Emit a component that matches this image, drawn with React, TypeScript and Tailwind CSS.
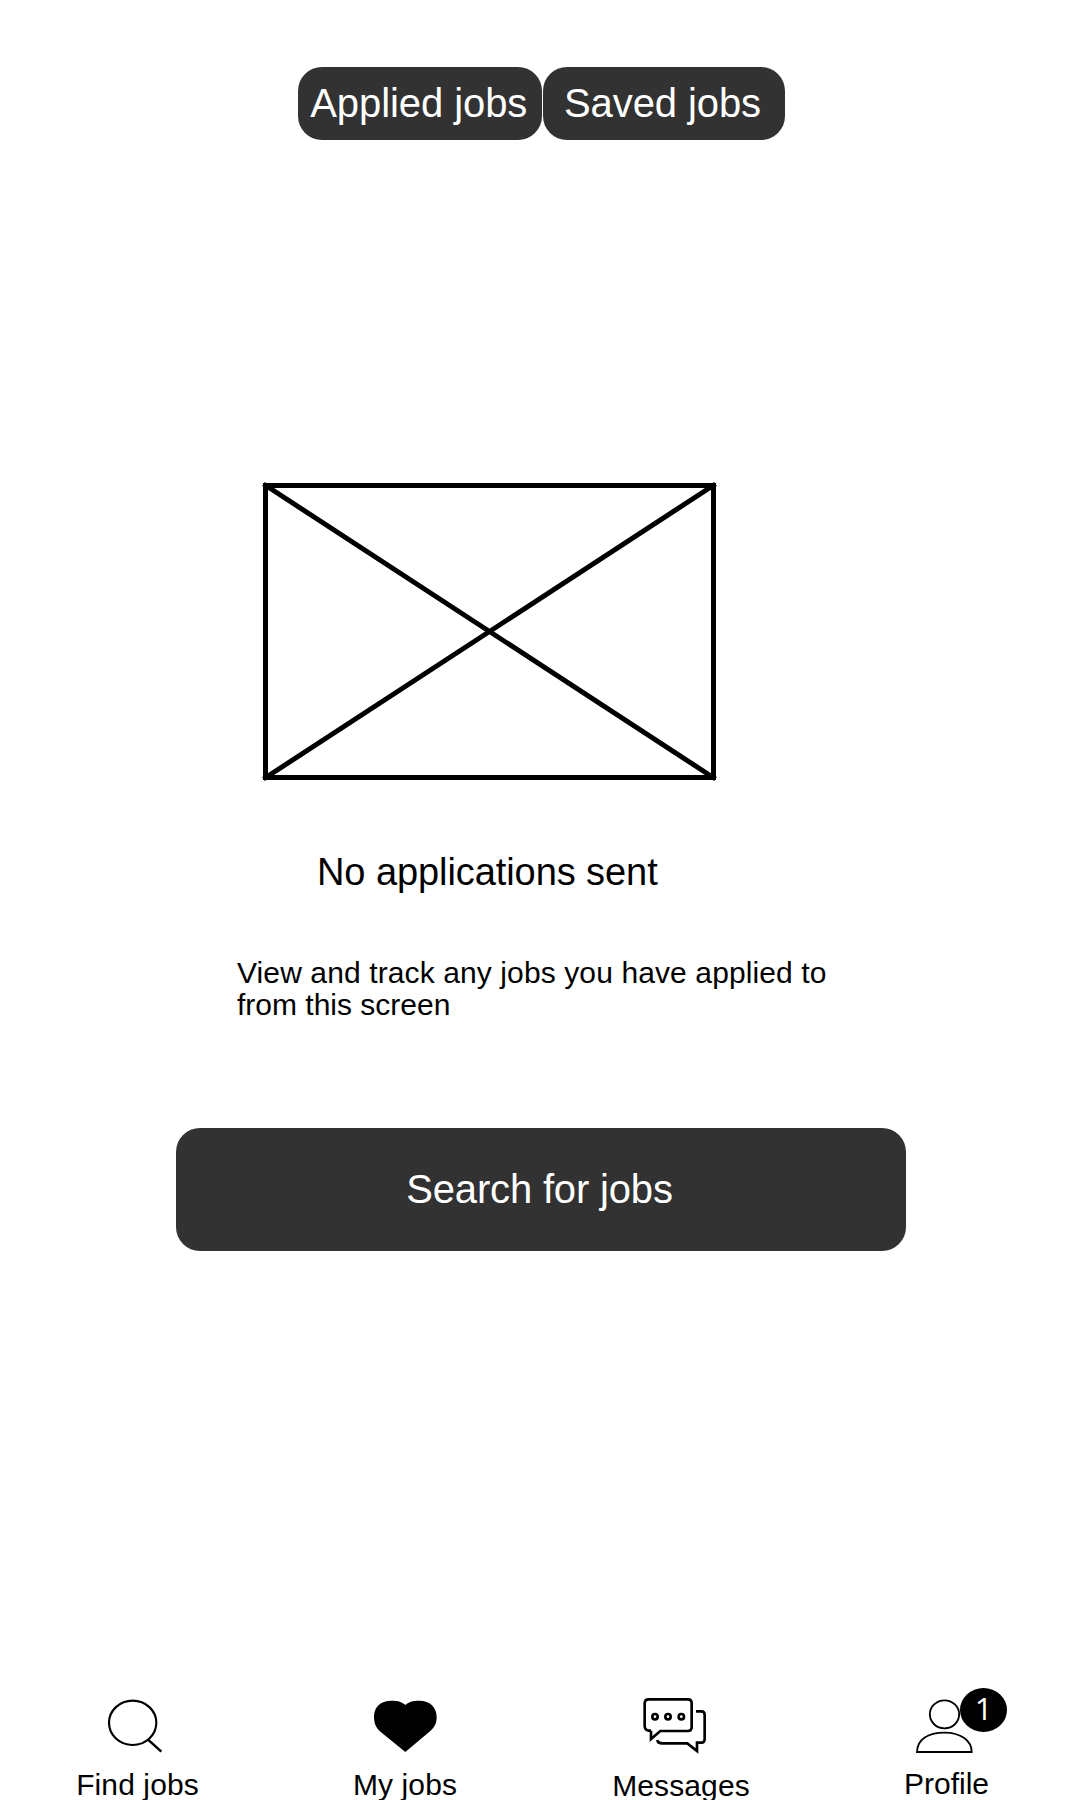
import type { ReactNode } from "react";

function NavItem({ label, shift, children }: { label: string; shift: string; children: ReactNode }) {
  return (
    <a className="flex flex-col items-center">
      <div className="relative h-20 w-[120px]">{children}</div>
      <span className={`whitespace-nowrap text-[30px] ${shift}`}>{label}</span>
    </a>
  );
}

function SearchIcon() {
  return (
    <svg className="h-20 w-[120px]" viewBox="51 15 360 240" fill="none" stroke="black">
      <ellipse cx="218" cy="128.5" rx="71" ry="66.5" strokeWidth="6.5" />
      <path d="M264 179L304 215" strokeWidth="7.5" />
    </svg>
  );
}

function HeartIcon() {
  return (
    <svg className="h-20 w-[120px]" viewBox="45 15 360 240">
      <path d="M226 75C217 66 205 62 184 62C151 62 132 82 132 110C132 134 141 147 156 159L226 216L300 154C314 141 320 130 320 111C320 82 300 62 268 62C248 62 235 66 226 75Z" />
    </svg>
  );
}

function MessagesIcon() {
  return (
    <svg className="h-20 w-[120px]" viewBox="63 15 360 240" fill="none" stroke="black" strokeWidth="8">
      <path d="M153 152H146Q134 150 134 138V70Q134 58 146 58H264Q275 58 275 70V142Q275 153 264 153H181L153 177V152" />
      <path d="M288 94H304Q314 94 314 105V176Q314 188 304 188H291V213L262 190H188Q173 190 172 180" />
      <circle cx="165" cy="110" r="8" strokeWidth="8" />
      <circle cx="204" cy="110" r="8" strokeWidth="8" />
      <circle cx="244" cy="110" r="8" strokeWidth="8" />
    </svg>
  );
}

function ProfileIcon() {
  return (
    <svg className="h-20 w-[120px]" viewBox="-9 15 360 240" fill="none" stroke="black" strokeWidth="5.5">
      <ellipse cx="163.5" cy="103" rx="44" ry="42" />
      <path d="M81 216C81 180 113 158 163 158C213 158 245 182 245 216Z" />
    </svg>
  );
}

export default function App() {
  return (
    <main className="flex h-[1800px] w-[1080px] flex-col overflow-hidden bg-white font-['Liberation_Sans',Arial,sans-serif] text-black">
      <div className="ml-[298px] mt-[67px] flex gap-[1.5px] text-[40px] leading-[73px] text-white">
        <button className="h-[73px] w-[243.5px] whitespace-nowrap rounded-[24px] bg-[#323232] pr-[2px] tracking-[-0.07px]">Applied jobs</button>
        <button className="h-[73px] w-[242px] whitespace-nowrap rounded-[24px] bg-[#323232] pr-[3px] tracking-[-0.1px]">Saved jobs</button>
      </div>

      <svg className="ml-[260px] mt-[340px] h-[304px] w-[460px] shrink-0" viewBox="260 480 460 304" fill="none" stroke="black">
        <rect x="265.5" y="485.5" width="448" height="292" strokeWidth="5" shapeRendering="crispEdges" />
        <path d="M263.5 484L715.5 779M263.5 779L715.5 484" strokeWidth="5" />
      </svg>

      <h1 className="ml-[317px] mt-[66px] h-[44px] whitespace-nowrap text-[38px] leading-[44px] tracking-[-0.08px]">No applications sent</h1>
      <p className="ml-[237px] mt-[63px] h-[64px] whitespace-nowrap text-[30px] leading-[32px]">
        <span className="tracking-[0.11px]">View and track any jobs you have applied to</span>
        <br />
        from this screen
      </p>

      <button className="ml-[176px] mt-[107px] h-[123px] w-[730px] shrink-0 rounded-[24px] bg-[#323232] pr-[3px] text-[40px] leading-[123px] tracking-[-0.17px] text-white">
        Search for jobs
      </button>

      <nav className="mt-auto grid h-[115px] shrink-0 grid-cols-[274px_262px_290px_242px]">
        <NavItem label="Find jobs" shift="mt-[5px] pl-px leading-[30px] tracking-[0.1px]"><SearchIcon /></NavItem>
        <NavItem label="My jobs" shift="mt-[5px] leading-[30px] tracking-[0.1px]"><HeartIcon /></NavItem>
        <NavItem label="Messages" shift="mt-[7px] leading-[28px] tracking-[0.1px]"><MessagesIcon /></NavItem>
        <NavItem label="Profile" shift="mt-[4px] pr-px leading-[30px]">
          <ProfileIcon />
          <span className="absolute left-[73px] top-[3px] h-[44px] w-[47px] rounded-[50%] bg-black text-center font-['Open_Sans',sans-serif] text-[31px] leading-[41px] text-white">1</span>
        </NavItem>
      </nav>
    </main>
  );
}
